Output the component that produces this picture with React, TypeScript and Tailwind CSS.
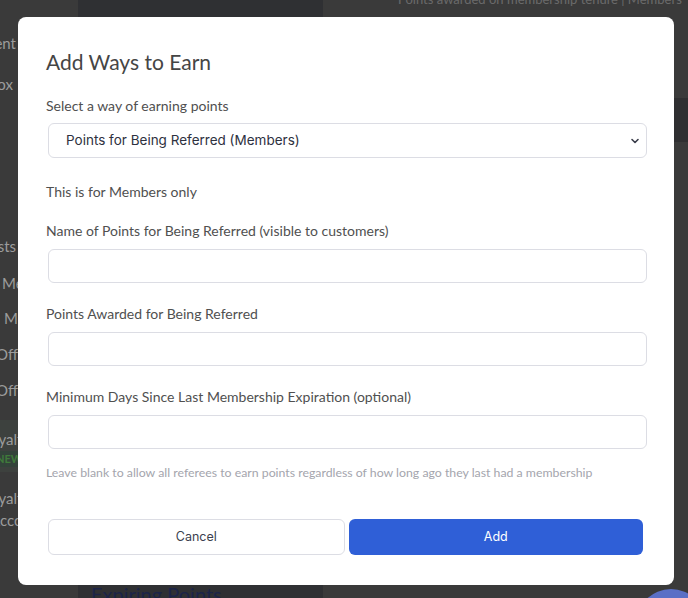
import React from "react";

const lato = { fontFamily: "Lato, 'Noto Sans', sans-serif" };
const inter = { fontFamily: "Inter, 'Liberation Sans', sans-serif" };

function Field({ label, mt }: { label: string; mt: string }) {
  return (
    <>
      <div className={`${mt} text-[14px] leading-[20px] text-[#505050]`}>{label}</div>
      <div className="mt-[8px] ml-[2px] h-[34px] rounded-[6px] border border-[#dcdde4] bg-white" />
    </>
  );
}

function SideItem({ text, cls }: { text: string; cls: string }) {
  return <div className={`${cls} whitespace-nowrap leading-[20px]`}>{text}</div>;
}

export default function App() {
  return (
    <div className="relative w-[688px] h-[598px] overflow-hidden bg-[#3a3a3a]" style={lato}>
      {/* background page (dimmed) */}
      <div className="flex h-full">
        <div className="w-[78px] shrink-0 h-full bg-[#3a3a3a] flex flex-col text-[15px] text-[#9c9c9c]">
          <div className="w-[16px] flex flex-col items-end">
            <SideItem cls="mt-[33px]" text="Content" />
            <SideItem cls="mt-[21px] mr-[3px]" text="Inbox" />
            <SideItem cls="mt-[142px]" text="Posts" />
          </div>
          <div className="flex flex-col items-start">
            <SideItem cls="mt-[17px] ml-[2px]" text="Members" />
            <SideItem cls="mt-[15px] ml-[4px]" text="Members" />
            <SideItem cls="mt-[16px] ml-[-4px]" text="Offers" />
            <SideItem cls="mt-[16px] ml-[-4px]" text="Offers" />
          </div>
          <div className="mt-[20px] h-[52px] w-full bg-[#3d413e] flex flex-col items-start">
            <SideItem cls="mt-[9px] ml-[-17px]" text="Loyalty" />
            <div className="mt-[2px] ml-[-8px] px-[4px] text-[11px] leading-[16px] font-bold text-[#3f7a3a] bg-[#33433a]">NEW</div>
          </div>
          <div className="flex flex-col items-start">
            <SideItem cls="mt-[16px] ml-[-17px]" text="Loyalty" />
            <SideItem cls="mt-[2px] ml-[-10px]" text="Account" />
          </div>
        </div>
        <div className="w-[245px] shrink-0 h-full bg-[#2f3033] flex flex-col justify-end pl-[13px]">
          <div className="text-[20px] leading-[24px] text-[#1c2448] mb-[-8px]">Expiring Points</div>
        </div>
        <div className="flex-1 min-w-0 h-full bg-[#3a3a3a] flex flex-col">
          <div className="mt-[-9px] pl-[75px] text-[13px] leading-[16px] text-[#6a6a6a] whitespace-nowrap">Points awarded on membership tenure | Members</div>
          <div className="mt-[91px] self-end w-[14px] h-[44px] bg-[#2f2f31]" />
          <div className="mt-auto mb-[-61px] ml-[313px] w-[70px] h-[70px] shrink-0 rounded-full bg-[#5a6fc6]" />
        </div>
      </div>

      {/* modal */}
      <div className="absolute left-[18px] top-[17px] w-[656px] h-[568px] rounded-[8px] bg-white pl-[28px] pr-[27px] pt-[32px] flex flex-col">
        <div className="text-[21px] leading-[26px] text-[#454545]">Add Ways to Earn</div>
        <div className="mt-[21px] text-[14px] leading-[20px] text-[#505050]">Select a way of earning points</div>
        <div className="mt-[7px] ml-[2px] h-[35px] rounded-[6px] border border-[#dcdde4] bg-white flex items-center justify-between pl-[17px] pr-[6px]">
          <span className="text-[13.5px] text-[#2e3140]" style={inter}>Points for Being Referred (Members)</span>
          <svg width="10" height="10" viewBox="0 0 10 10">
            <path d="M2 3.5 L5 6.5 L8 3.5" fill="none" stroke="#3a3d4a" strokeWidth="1.6" strokeLinecap="round" strokeLinejoin="round" />
          </svg>
        </div>
        <div className="mt-[24px] text-[14px] leading-[20px] text-[#505050]">This is for Members only</div>
        <Field mt="mt-[19px]" label="Name of Points for Being Referred (visible to customers)" />
        <Field mt="mt-[21px]" label="Points Awarded for Being Referred" />
        <Field mt="mt-[21px]" label="Minimum Days Since Last Membership Expiration (optional)" />
        <div className="mt-[16px] text-[12.3px] leading-[16px] text-[#a4a5ad]">
          Leave blank to allow all referees to earn points regardless of how long ago they last had a membership
        </div>
        <div className="mt-[38px] ml-[2px] flex gap-[4px] pr-[4px]">
          <button className="flex-1 h-[36px] rounded-[6px] border border-[#dcdde4] bg-white text-[12.5px] text-[#3b3f4e]" style={inter}>Cancel</button>
          <button className="flex-1 h-[36px] rounded-[6px] bg-[#2f5fd7] text-[12.5px] text-white" style={inter}>Add</button>
        </div>
      </div>
    </div>
  );
}
